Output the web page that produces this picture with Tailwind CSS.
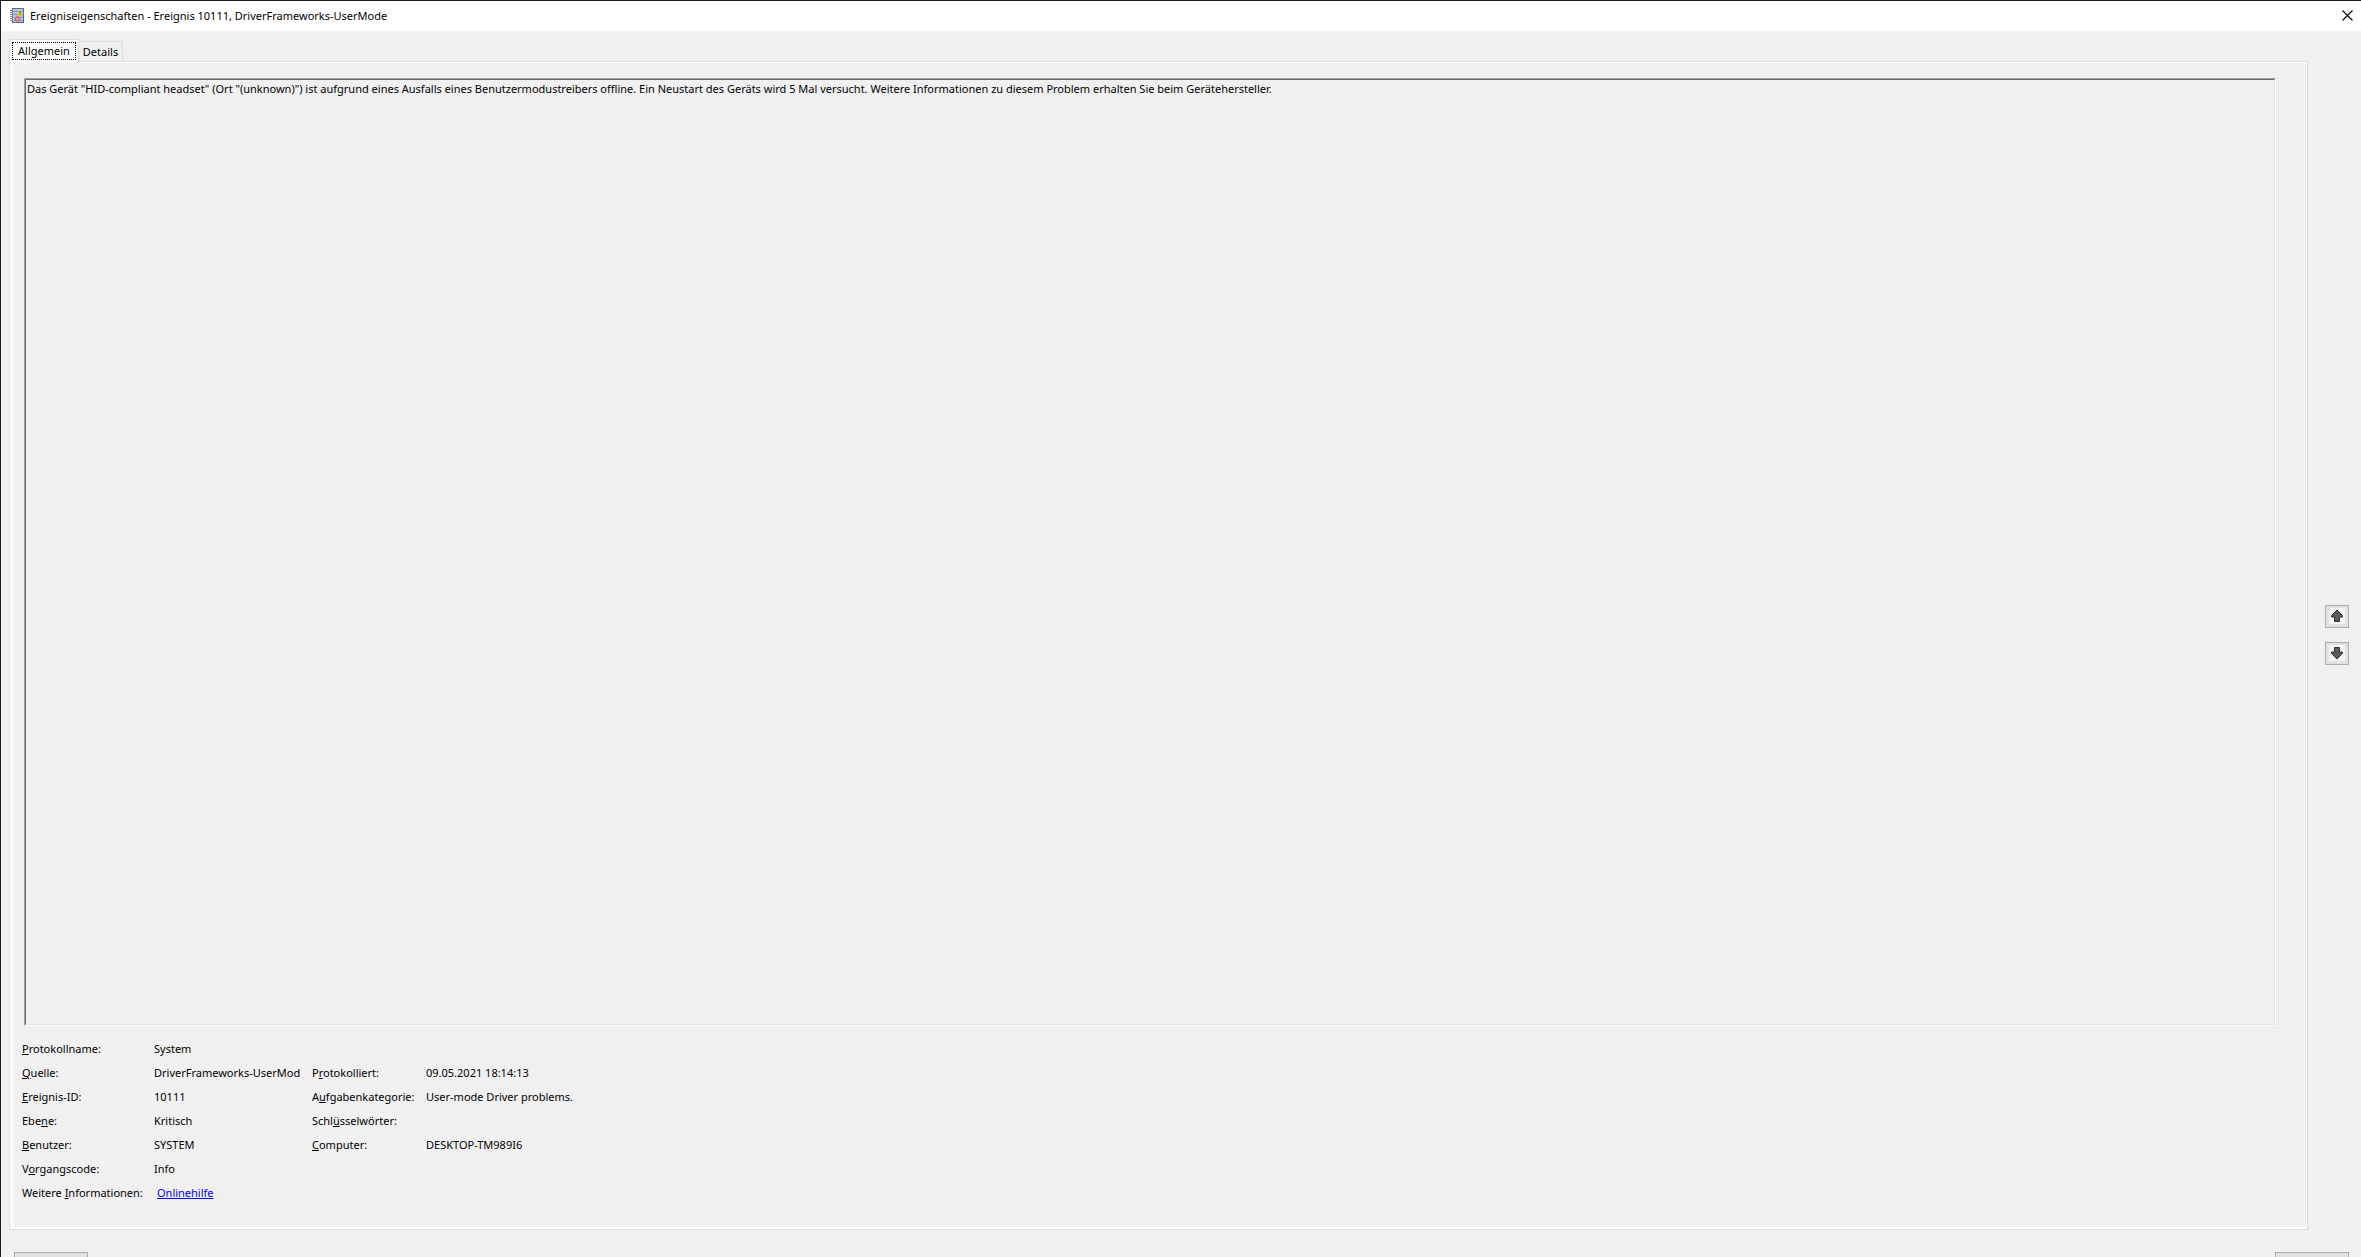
<!DOCTYPE html>
<html lang="de">
<head>
<meta charset="utf-8">
<meta name="viewport" content="width=device-width, initial-scale=1">
<title>Ereigniseigenschaften</title>
<script src="https://cdn.jsdelivr.net/npm/@tailwindcss/browser@4"></script>
</head>
<body class="flex h-screen flex-col overflow-hidden border-t border-l border-[#1a1a1a] bg-[#f0f0f0] font-['Noto_Sans',sans-serif] text-[11px] leading-4 text-black">
  <header class="flex h-[30px] shrink-0 items-center bg-white pr-2 pb-px pl-[9px]">
    <svg class="size-4" viewBox="0 0 16 16" aria-hidden="true">
      <rect x="2.500" y=".5" width="11" height="14" fill="#b4c8e4" stroke="#5a688c"/>
      <path d="M4 3.500h9M4 6.500h9M4 9.500h9M4 12.500h9" stroke="#7f96bd"/>
      <path d="M0 2.500h3M0 4.500h3M0 6.500h3M0 8.500h3M0 10.500h3M0 12.500h3" stroke="#8a8a8a"/>
      <path d="M10 2l2.800 5.500H7.200z" fill="#f2e04a" stroke="#d2b822" stroke-width=".6"/>
      <path d="M10 3.600v2M10 6.200v.8" stroke="#333"/>
      <circle cx="7.500" cy="10.800" r="2.600" fill="#d8585e"/>
      <path d="M6.500 9.800l2 2M8.500 9.800l-2 2" stroke="#fff" stroke-width=".8"/>
    </svg>
    <h1 class="ml-1 flex-1 whitespace-nowrap">Ereigniseigenschaften - Ereignis 10111, DriverFrameworks-UserMode</h1>
    <button type="button" aria-label="Fenster schließen" class="grid size-[11px] place-items-center">
      <svg class="size-[11px]" viewBox="0 0 11 11"><path d="M.5.5l10 10M10.500.5l-10 10" stroke="#000" stroke-width="1.100"/></svg>
    </button>
  </header>

  <div class="flex min-h-0 flex-1 pt-2 pr-3 pl-2">
    <main class="flex min-w-0 flex-1 flex-col">
      <div role="tablist" class="relative -mb-px flex items-end">
        <button type="button" role="tab" aria-selected="true" class="h-[23px] w-[70px] border border-b-0 border-[#dcdcdc] bg-white px-0.5 pt-px pb-0.5">
          <span class="block h-[18px] border border-dotted border-black leading-[15px]">Allgemein</span>
        </button>
        <button type="button" role="tab" aria-selected="false" class="h-[21px] w-[44px] border border-l-0 border-[#dcdcdc]">Details</button>
      </div>
      <section role="tabpanel" class="flex min-h-0 flex-1 flex-col border border-[#dcdcdc]">
        <div class="flex min-h-0 flex-1 flex-col border-t border-r border-b-2 border-l-3 border-white pt-[15px] pr-[30px] pb-[22px] pl-[9px]">
          <div class="ml-0.5 flex min-h-0 flex-1 border border-t-[#a0a0a0] border-r-white border-b-white border-l-[#a0a0a0]">
            <p class="flex-1 border border-t-[#696969] border-r-[#e3e3e3] border-b-[#e3e3e3] border-l-[#696969] px-px pt-px">Das Gerät "HID-compliant headset" (Ort "(unknown)") ist aufgrund eines Ausfalls eines Benutzermodustreibers offline. Ein Neustart des Geräts wird 5 Mal versucht. Weitere Informationen zu diesem Problem erhalten Sie beim Gerätehersteller.</p>
          </div>
          <div class="mt-[11px] grid auto-rows-[24px] grid-cols-[132px_158px_114px_1fr] items-center whitespace-nowrap">
            <span><u>P</u>rotokollname:</span><span class="col-span-3">System</span>
            <span><u>Q</u>uelle:</span><span>DriverFrameworks-UserMod</span><span>P<u>r</u>otokolliert:</span><span>09.05.2021 18:14:13</span>
            <span><u>E</u>reignis-ID:</span><span>10111</span><span>A<u>u</u>fgabenkategorie:</span><span>User-mode Driver problems.</span>
            <span>Ebe<u>n</u>e:</span><span>Kritisch</span><span class="col-span-2">Schl<u>ü</u>sselwörter:</span>
            <span><u>B</u>enutzer:</span><span>SYSTEM</span><span><u>C</u>omputer:</span><span>DESKTOP-TM989I6</span>
            <span>V<u>o</u>rgangscode:</span><span class="col-span-3">Info</span>
            <span>Weitere <u>I</u>nformationen:</span><a href="#" class="ml-[3px] justify-self-start text-[#0000ff] underline">Onlinehilfe</a>
          </div>
        </div>
      </section>
    </main>
    <nav class="ml-[17px] flex flex-col justify-center gap-[14px]" aria-label="Ereignisnavigation">
      <button type="button" aria-label="Vorheriges Ereignis" class="grid h-[23px] w-6 place-items-center border border-[#adadad] bg-[#e1e1e1]">
        <svg class="size-4 bg-[#f4f4f4]" viewBox="0 0 16 16"><path d="M8 2l5.500 5.500V9H10.500v4.500h-5V9h-3V7.500z" fill="#5a5a5a" stroke="#333"/></svg>
      </button>
      <button type="button" aria-label="Nächstes Ereignis" class="grid h-[23px] w-6 place-items-center border border-[#adadad] bg-[#e1e1e1]">
        <svg class="size-4 bg-[#f4f4f4]" viewBox="0 0 16 16"><path d="M8 14l5.500-5.500V7H10.500V2.500h-5V7h-3v1.500z" fill="#5a5a5a" stroke="#333"/></svg>
      </button>
    </nav>
  </div>

  <footer class="flex h-[27px] shrink-0 justify-between pt-[22px] pr-3 pl-[13px]">
    <button type="button" aria-label="Kopieren" class="h-[23px] w-[74px] border border-[#adadad] bg-[#e1e1e1]"></button>
    <button type="button" aria-label="Schließen" class="h-[23px] w-[74px] border border-[#adadad] bg-[#e1e1e1]"></button>
  </footer>
</body>
</html>
